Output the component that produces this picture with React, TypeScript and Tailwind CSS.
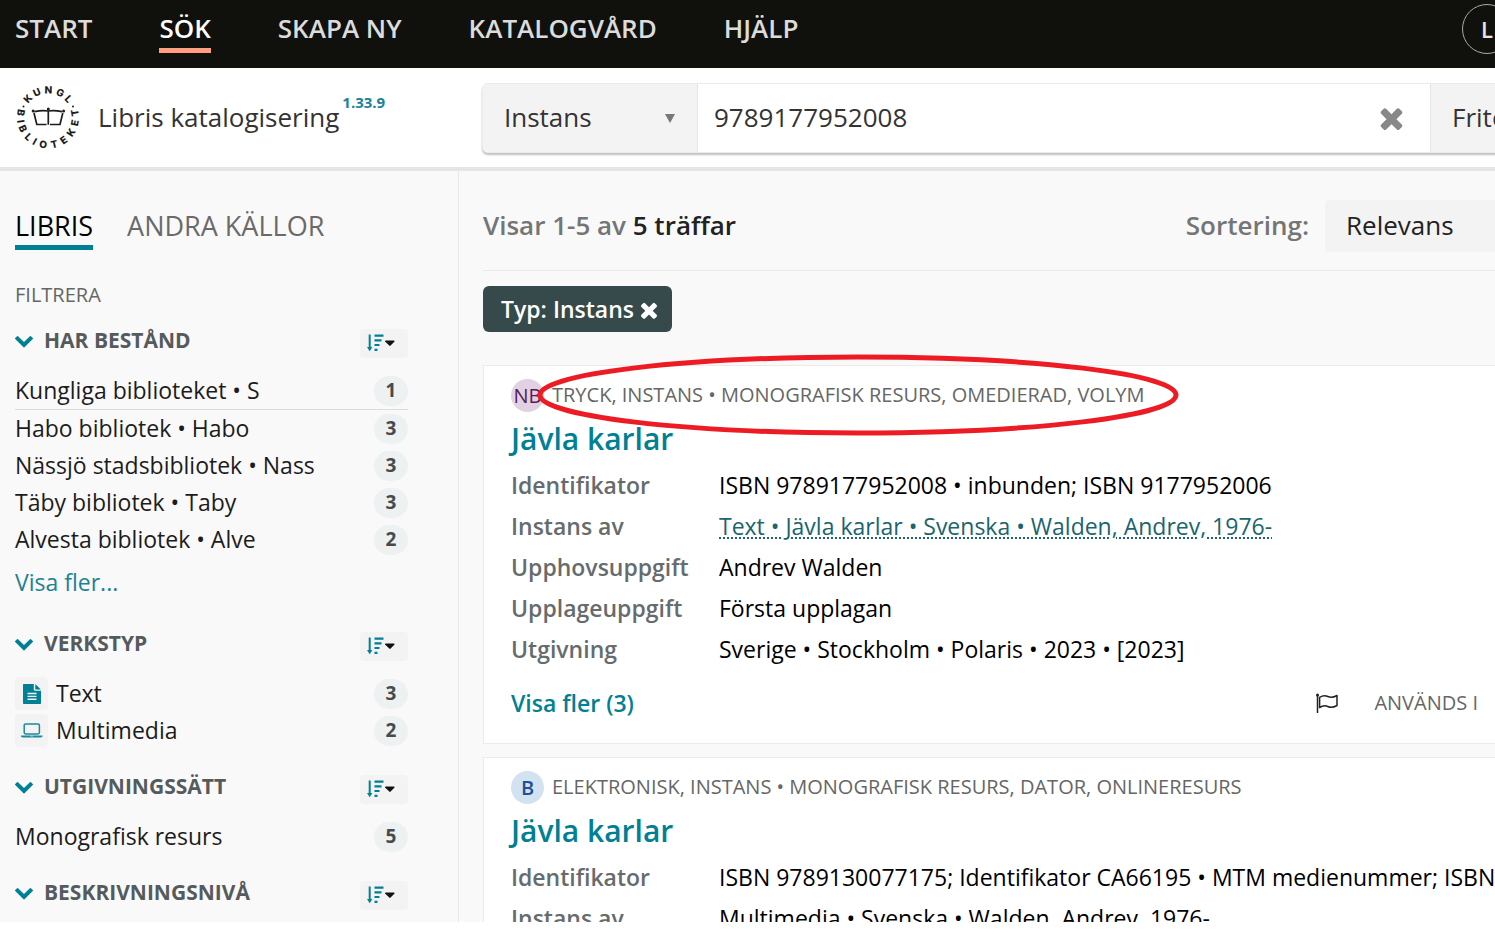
import React from "react";

const SEAL_TOP: [string, number][] = [
  ["K", -47], ["U", -24], ["N", 1], ["G", 26], ["L", 48],
];
const SEAL_BOTTOM: [string, number][] = [
  ["T", 80], ["E", 101], ["K", 123], ["E", 145], ["T", 167], ["O", 190],
  ["I", 209], ["L", 225], ["B", 246], ["I", 262], ["B", 280],
];

function Seal() {
  return (
    <svg viewBox="0 0 64 64" className="h-16 w-16 shrink-0 overflow-visible text-[#1c1c1c]" fill="none" aria-label="Kungl. Biblioteket">
      <g fill="currentColor" fontSize="10" fontWeight="800" fontFamily="Inter, sans-serif" textAnchor="middle">
        {SEAL_TOP.map(([c, a]) => (
          <text key={a} x="32" y="7.5" transform={`rotate(${a} 32 31.500)`}>{c}</text>
        ))}
        {SEAL_BOTTOM.map(([c, a]) => (
          <text key={a} x="32" y="62.5" transform={`rotate(${a - 180} 32 31.500)`}>{c}</text>
        ))}
        <circle cx="57" cy="20.500" r="1" />
        <circle cx="7.500" cy="20.500" r="1" />
        <circle cx="17.200" cy="24.900" r="1.500" />
        <circle cx="32.300" cy="23.100" r="1.500" />
        <circle cx="47.600" cy="24.900" r="1.500" />
      </g>
      <path
        d="M18 27l2.800 11.500h9.700M46.800 27l-2.800 11.500H34M18.500 25.600c4.500-.9 9.500-1.200 13.800-.6 4.300-.6 9 -.3 13.700.6M32.300 25v13.800"
        stroke="currentColor"
        strokeWidth="1.700"
      />
    </svg>
  );
}

function Cross({ className }: { className: string }) {
  return (
    <svg viewBox="302 238 1188 1316" className={className} fill="currentColor" aria-hidden="true">
      <path d="M1490 1322q0 40-28 68l-136 136q-28 28-68 28t-68-28l-294-294-294 294q-28 28-68 28t-68-28l-136-136q-28-28-28-68t28-68l294-294-294-294q-28-28-28-68t28-68l136-136q28-28 68-28t68 28l294 294 294-294q28-28 68-28t68 28l136 136q28 28 28 68t-28 68l-294 294 294 294q28 28 28 68z" />
    </svg>
  );
}

function Chevron() {
  return (
    <svg viewBox="0 0 1792 1792" className="h-5 w-5 shrink-0 text-[#008094]" fill="currentColor" aria-hidden="true">
      <path d="M1683 808l-742 741q-19 19-45 19t-45-19l-742-741q-19-19-19-45.500t19-45.500l166-165q19-19 45-19t45 19l531 531 531-531q19-19 45-19t45 19l166 165q19 19 19 45.500t-19 45.500z" />
    </svg>
  );
}

function SortButton({ label }: { label: string }) {
  return (
    <button type="button" aria-label={"Sortera " + label} className="flex h-[29px] w-12 items-center rounded bg-[#f3f3f3] pl-[7px]">
      <svg viewBox="0 0 28 18" className="h-[18px] w-7" aria-hidden="true">
        <path d="M2.700.500v13" stroke="#008094" strokeWidth="2" fill="none" />
        <path d="M0 13h5.400l-2.700 4.200z" fill="#008094" />
        <path d="M7.500 1.600h9M7.500 6.300h7M7.500 11h5M7.500 15.800h3" stroke="#008094" strokeWidth="2.200" />
        <path d="M18.800 6.500h8c.8 0 1 .8.500 1.300l-3.700 3.800c-.4.400-.9.400-1.300 0l-4-3.800c-.5-.5-.3-1.300.5-1.300z" fill="#111" />
      </svg>
    </button>
  );
}

function FileIcon() {
  return (
    <svg viewBox="0 0 18 20" className="h-5 w-[18px]" aria-hidden="true">
      <path d="M1 0h9.800v5.600c0 .700.500 1.200 1.200 1.200h6V19c0 .600-.4 1-1 1H1c-.6 0-1-.4-1-1V1c0-.6.400-1 1-1z" fill="#008094" />
      <path d="M12.300.200c.300.100.600.300.800.500l4 4c.2.200.4.500.5.800h-5.300z" fill="#008094" />
      <path d="M4.500 9.500h9M4.500 12.400h9M4.500 15.300h9" stroke="#f3f3f3" strokeWidth="1.400" />
    </svg>
  );
}

function LaptopIcon() {
  return (
    <svg viewBox="0 0 22 15" className="h-[15px] w-[22px]" fill="none" aria-hidden="true">
      <rect x="3.200" y=".9" width="15.200" height="10" rx="1.400" stroke="#1a8a9c" strokeWidth="1.500" />
      <path d="M0 12.400h21.500v.900c0 .7-.8 1.200-1.700 1.200H1.700c-.9 0-1.700-.5-1.700-1.200z" fill="#1a8a9c" />
      <path d="M9.500 13h2.600" stroke="#f3f3f3" strokeWidth=".7" />
    </svg>
  );
}

function FlagIcon() {
  return (
    <svg viewBox="0 0 24 20" className="h-5 w-6 text-[#222]" fill="none" stroke="currentColor" aria-hidden="true">
      <circle cx="2.500" cy="2" r="1.500" fill="currentColor" stroke="none" />
      <path d="M2.500 2v18" strokeWidth="1.500" />
      <path d="M4.600 4.300c3-1.800 5.600-2 8.200-.8 2.800 1.300 5.600 1 9.200-1v10c-3.300 1.900-6.300 2.400-9.200 1-2.600-1.200-5.200-.9-8.200 1z" strokeWidth="1.500" strokeLinejoin="round" />
    </svg>
  );
}

type Item = { name: string; count: number; icon?: React.ReactNode; ruled?: boolean };

function Facet({ title, items, more, className }: { title: string; items: Item[]; more?: boolean; className: string }) {
  return (
    <section className={className}>
      <div className="flex h-[30px] items-center justify-between">
        <h3 className="-mt-[6px] -ml-px flex items-center gap-[10px] text-[21px] leading-7 font-bold text-[#555b5c]">
          <Chevron />
          {title}
        </h3>
        <SortButton label={title} />
      </div>
      {items.length > 0 && (
        <ul className="mt-[14px]">
          {items.map((i) => (
            <li key={i.name} className={i.ruled ? "border-b border-[#dcdcdc]" : ""}>
              <a href="#" className="flex h-[37px] items-center gap-2">
                {i.icon && (
                  <span className="flex h-[33px] w-[33px] items-center justify-center rounded bg-[#f3f3f3]">{i.icon}</span>
                )}
                <span>{i.name}</span>
                <span className="ml-auto flex h-[30px] w-[34px] items-center justify-center rounded-full bg-[#eef1f1] text-[19px] font-bold text-[#444c4d]">
                  {i.count}
                </span>
              </a>
            </li>
          ))}
        </ul>
      )}
      {more && <a href="#" className="mt-2 block leading-8 text-[#1a8396]">Visa fler...</a>}
    </section>
  );
}

function Record({ badge, kind, rows, children }: {
  badge: React.ReactNode; kind: string; rows: [string, React.ReactNode][]; children?: React.ReactNode;
}) {
  return (
    <article className="relative mb-[13px] border border-[#ebebeb] bg-white px-[27px] pt-[13px] pb-[22px]">
      <div className="flex h-[33px] items-center gap-2 text-[20px] whitespace-nowrap text-[#666]">
        {badge}
        <span className="-mt-[2px]">{kind}</span>
      </div>
      <h2 className="mt-[7px] mb-[6px] text-[30px] leading-10 font-semibold text-[#008094]">
        <a href="#">Jävla karlar</a>
      </h2>
      <dl>
        {rows.map(([k, v]) => (
          <div key={k} className="flex h-[41px] items-center whitespace-nowrap">
            <dt className="w-52 shrink-0 font-semibold text-[#666c6d]">{k}</dt>
            <dd className="text-black">{v}</dd>
          </div>
        ))}
      </dl>
      {children}
    </article>
  );
}

export default function App() {
  return (
    <div className="flex h-screen flex-col overflow-hidden bg-white pb-[18px] font-['Open_Sans',sans-serif] text-[23px] text-[#1c1c1c]">
      <header className="flex h-[68px] shrink-0 items-start bg-[#10110d] pl-[15px]">
        <nav className="flex gap-[67px] pt-[9px] text-[26px] leading-[39px] font-semibold text-[#dcdcdc]">
          <a href="#">START</a>
          <a href="#" className="border-b-5 border-[#ff9f7f] text-white">SÖK</a>
          <a href="#">SKAPA NY</a>
          <a href="#">KATALOGVÅRD</a>
          <a href="#">HJÄLP</a>
        </nav>
        <button type="button" className="mt-1 -mr-[17px] ml-auto h-[50px] w-[50px] shrink-0 rounded-full border border-[#aaa] text-[22px] font-semibold text-[#e5e5e5]">L</button>
      </header>

      <div className="flex h-[103px] shrink-0 items-center border-b-4 border-[#e5e5e5]">
        <div className="flex w-[482px] shrink-0 items-center pl-4">
          <Seal />
          <span className="ml-[18px] text-[26px] text-[#333]">Libris katalogisering</span>
          <span className="mb-[30px] ml-[3px] text-[15px] font-bold text-[#1a8396]">1.33.9</span>
        </div>
        <form className="-mr-5 flex h-[70px] min-w-0 flex-1 overflow-hidden rounded-md border border-[#ebebeb] bg-white text-[26px] text-[#333] shadow-[0_2px_2px_rgba(0,0,0,0.25)]">
          <div className="relative w-[215px] shrink-0 border-r border-[#e5e5e5] bg-[#f3f3f3]">
            <select aria-label="Typ" className="h-full w-full appearance-none pl-[21px]">
              <option>Instans</option>
            </select>
            <svg viewBox="0 0 10 9" className="pointer-events-none absolute top-[30px] right-[22px] h-[9px] w-[10px]" aria-hidden="true">
              <path d="M0 0h10L5 9z" fill="#777" />
            </svg>
          </div>
          <input aria-label="Sök" defaultValue="9789177952008" className="min-w-0 flex-1 px-4 outline-none" />
          <button type="button" aria-label="Rensa" className="mr-[27px] text-[#888]">
            <Cross className="h-6 w-[23px]" />
          </button>
          <div className="w-[84px] shrink-0 border-l border-[#e5e5e5] bg-[#f3f3f3]">
            <select aria-label="Sökfält" className="h-full w-full appearance-none pl-[21px]">
              <option>Fritext</option>
            </select>
          </div>
        </form>
      </div>

      <div className="flex min-h-0 flex-1 overflow-hidden bg-[#f9f9f9]">
        <aside className="w-[459px] shrink-0 overflow-hidden border-r border-[#e8e8e8] pr-[50px] pl-[15px]">
          <div className="flex gap-[34px] pt-[35px] text-[27px] leading-[39px]">
            <button type="button" className="border-b-5 border-[#008094] text-black">LIBRIS</button>
            <button type="button" className="self-start text-[#6a6a6a]">ANDRA KÄLLOR</button>
          </div>
          <p className="mt-[31px] text-[20px] leading-7 text-[#666]">FILTRERA</p>
          <Facet
            className="mt-[19px]"
            title="HAR BESTÅND"
            more
            items={[
              { name: "Kungliga biblioteket • S", count: 1, ruled: true },
              { name: "Habo bibliotek • Habo", count: 3 },
              { name: "Nässjö stadsbibliotek • Nass", count: 3 },
              { name: "Täby bibliotek • Taby", count: 3 },
              { name: "Alvesta bibliotek • Alve", count: 2 },
            ]}
          />
          <Facet
            className="mt-[33px]"
            title="VERKSTYP"
            items={[
              { name: "Text", count: 3, icon: <FileIcon /> },
              { name: "Multimedia", count: 2, icon: <LaptopIcon /> },
            ]}
          />
          <Facet className="mt-[25px]" title="UTGIVNINGSSÄTT" items={[{ name: "Monografisk resurs", count: 5 }]} />
          <Facet className="mt-[25px]" title="BESKRIVNINGSNIVÅ" items={[]} />
        </aside>

        <main className="min-w-0 flex-1 overflow-hidden pl-6">
          <div className="-mr-5">
            <div className="flex h-[100px] items-center border-b border-[#ebebeb] pt-[10px] text-[26px] text-[#757575]">
              <p className="font-semibold">Visar 1-5 av <b className="font-semibold text-[#222]">5 träffar</b></p>
              <label htmlFor="sort" className="mr-4 ml-auto font-semibold">Sortering:</label>
              <select id="sort" className="h-[52px] w-[190px] appearance-none rounded bg-[#f3f3f3] pl-[21px] font-normal text-[#222]">
                <option>Relevans</option>
              </select>
            </div>
            <button type="button" className="mt-[15px] mb-[33px] flex h-[46px] items-center gap-[7px] rounded-md bg-[#364a4c] pr-[15px] pl-[18px] font-semibold text-white">
              Typ: Instans
              <Cross className="mt-[2px] h-[18px] w-4" />
            </button>
            <Record
              badge={<span className="flex h-[33px] w-[33px] items-center justify-center rounded-full bg-[#e0d2e0] text-[#5a1a5e]">NB</span>}
              kind="TRYCK, INSTANS • MONOGRAFISK RESURS, OMEDIERAD, VOLYM"
              rows={[
                ["Identifikator", "ISBN 9789177952008 • inbunden; ISBN 9177952006"],
                ["Instans av", <a href="#" className="text-[#1a656e] underline decoration-dotted decoration-2 underline-offset-2">Text • Jävla karlar • Svenska • Walden, Andrev, 1976-</a>],
                ["Upphovsuppgift", "Andrev Walden"],
                ["Upplageuppgift", "Första upplagan"],
                ["Utgivning", "Sverige • Stockholm • Polaris • 2023 • [2023]"],
              ]}
            >
              <div className="mt-[15px] flex h-9 items-center">
                <a href="#" className="font-semibold text-[#008094]">Visa fler (3)</a>
                <button type="button" aria-label="Flagga" className="mr-[35px] ml-auto"><FlagIcon /></button>
                <a href="#" className="mr-[9px] text-[20px] text-[#666]">ANVÄNDS I</a>
              </div>
              <svg viewBox="0 0 644 84" className="pointer-events-none absolute -top-[13px] left-[52px] h-[84px] w-[644px]" aria-hidden="true">
                <ellipse cx="322" cy="42" rx="318" ry="38" fill="none" stroke="#ed1c24" strokeWidth="5" />
              </svg>
            </Record>
            <Record
              badge={<span className="flex h-[33px] w-[33px] items-center justify-center rounded-full bg-[#d3e2f0] font-semibold text-[#1c4f9c]">B</span>}
              kind="ELEKTRONISK, INSTANS • MONOGRAFISK RESURS, DATOR, ONLINERESURS"
              rows={[
                ["Identifikator", "ISBN 9789130077175; Identifikator CA66195 • MTM medienummer; ISBN"],
                ["Instans av", "Multimedia • Svenska • Walden, Andrev, 1976-"],
              ]}
            />
          </div>
        </main>
      </div>
    </div>
  );
}
